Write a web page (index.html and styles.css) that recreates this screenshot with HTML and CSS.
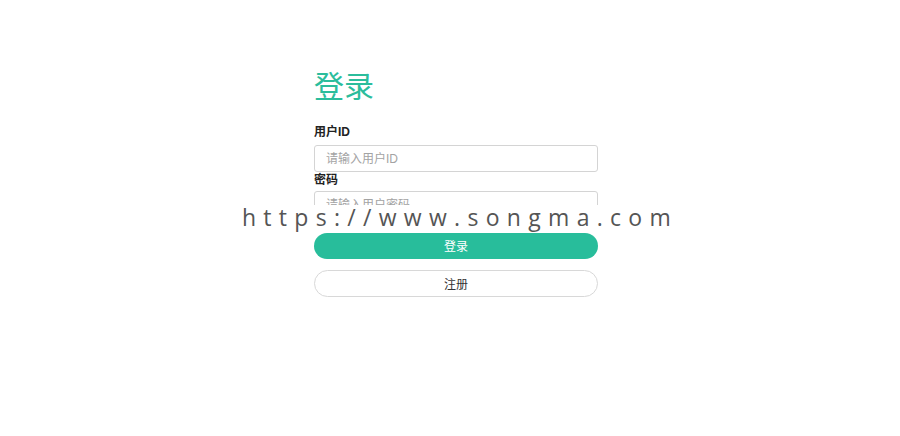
FILE: index.html
```html
<!DOCTYPE html>
<html lang="zh">
<head>
<meta charset="utf-8">
<title>登录</title>
<link rel="stylesheet" href="styles.css">
</head>
<body>
<main class="login">
  <h1 class="login-title">登录</h1>
  <form class="login-form">
    <label class="field-label" for="uid">用户ID</label>
    <input class="field-input" id="uid" type="text" placeholder="请输入用户ID">
    <label class="field-label field-label-tight" for="pwd">密码</label>
    <input class="field-input" id="pwd" type="password" placeholder="请输入用户密码">
    <button class="btn btn-primary" type="button">登录</button>
    <button class="btn btn-outline" type="button">注册</button>
  </form>
</main>
<div class="watermark">https://www.songma.com</div>
</body>
</html>
```
FILE: styles.css
```css
html, body {
  margin: 0;
  padding: 0;
  background: #fff;
}
body {
  width: 900px;
  height: 436px;
  position: relative;
  overflow: hidden;
  font-family: "Liberation Sans", "Noto Sans CJK SC", sans-serif;
  color: #333;
}
.login {
  width: 284px;
  margin-left: 314px;
  padding-top: 64px;
}
.login-title {
  margin: 0;
  font-family: "Noto Sans CJK SC", sans-serif;
  font-weight: 400;
  font-size: 30px;
  line-height: 40px;
  color: #2bbd9c;
}
.login-form {
  display: flex;
  flex-direction: column;
  margin-top: 20px;
}
.field-label {
  font-family: "Liberation Sans", "Noto Sans CJK SC", sans-serif;
  font-weight: 700;
  font-size: 12px;
  line-height: 16px;
  color: #222;
  margin-bottom: 5px;
}
.field-label-tight {
  margin-bottom: 3px;
}
.field-input {
  box-sizing: border-box;
  height: 27px;
  width: 100%;
  margin: 0;
  padding: 0 11px;
  border: 1px solid #d4d4d4;
  border-radius: 3px;
  font-family: "Liberation Sans", "Noto Sans CJK SC", sans-serif;
  font-size: 12px;
  color: #333;
  outline: none;
}
.field-input::placeholder {
  color: #a3a3a3;
}
.btn {
  box-sizing: border-box;
  width: 100%;
  height: 27px;
  margin: 0;
  border-radius: 14px;
  font-family: "Noto Sans CJK SC", sans-serif;
  font-size: 12px;
  line-height: 1;
  cursor: pointer;
}
.btn-primary {
  margin-top: 15px;
  border: none;
  background: #28bd9b;
  color: #fff;
  height: 26px;
}
.btn-outline {
  margin-top: 11px;
  border: 1px solid #d8d8d8;
  background: #fff;
  color: #333;
}
.watermark {
  position: absolute;
  top: 205px;
  left: 235px;
  width: 450px;
  height: 28px;
  background: #fff;
  font-family: "Open Sans", sans-serif;
  font-size: 23px;
  line-height: 25px;
  letter-spacing: 7.3px;
  color: #555;
  text-align: center;
  white-space: nowrap;
}
```
